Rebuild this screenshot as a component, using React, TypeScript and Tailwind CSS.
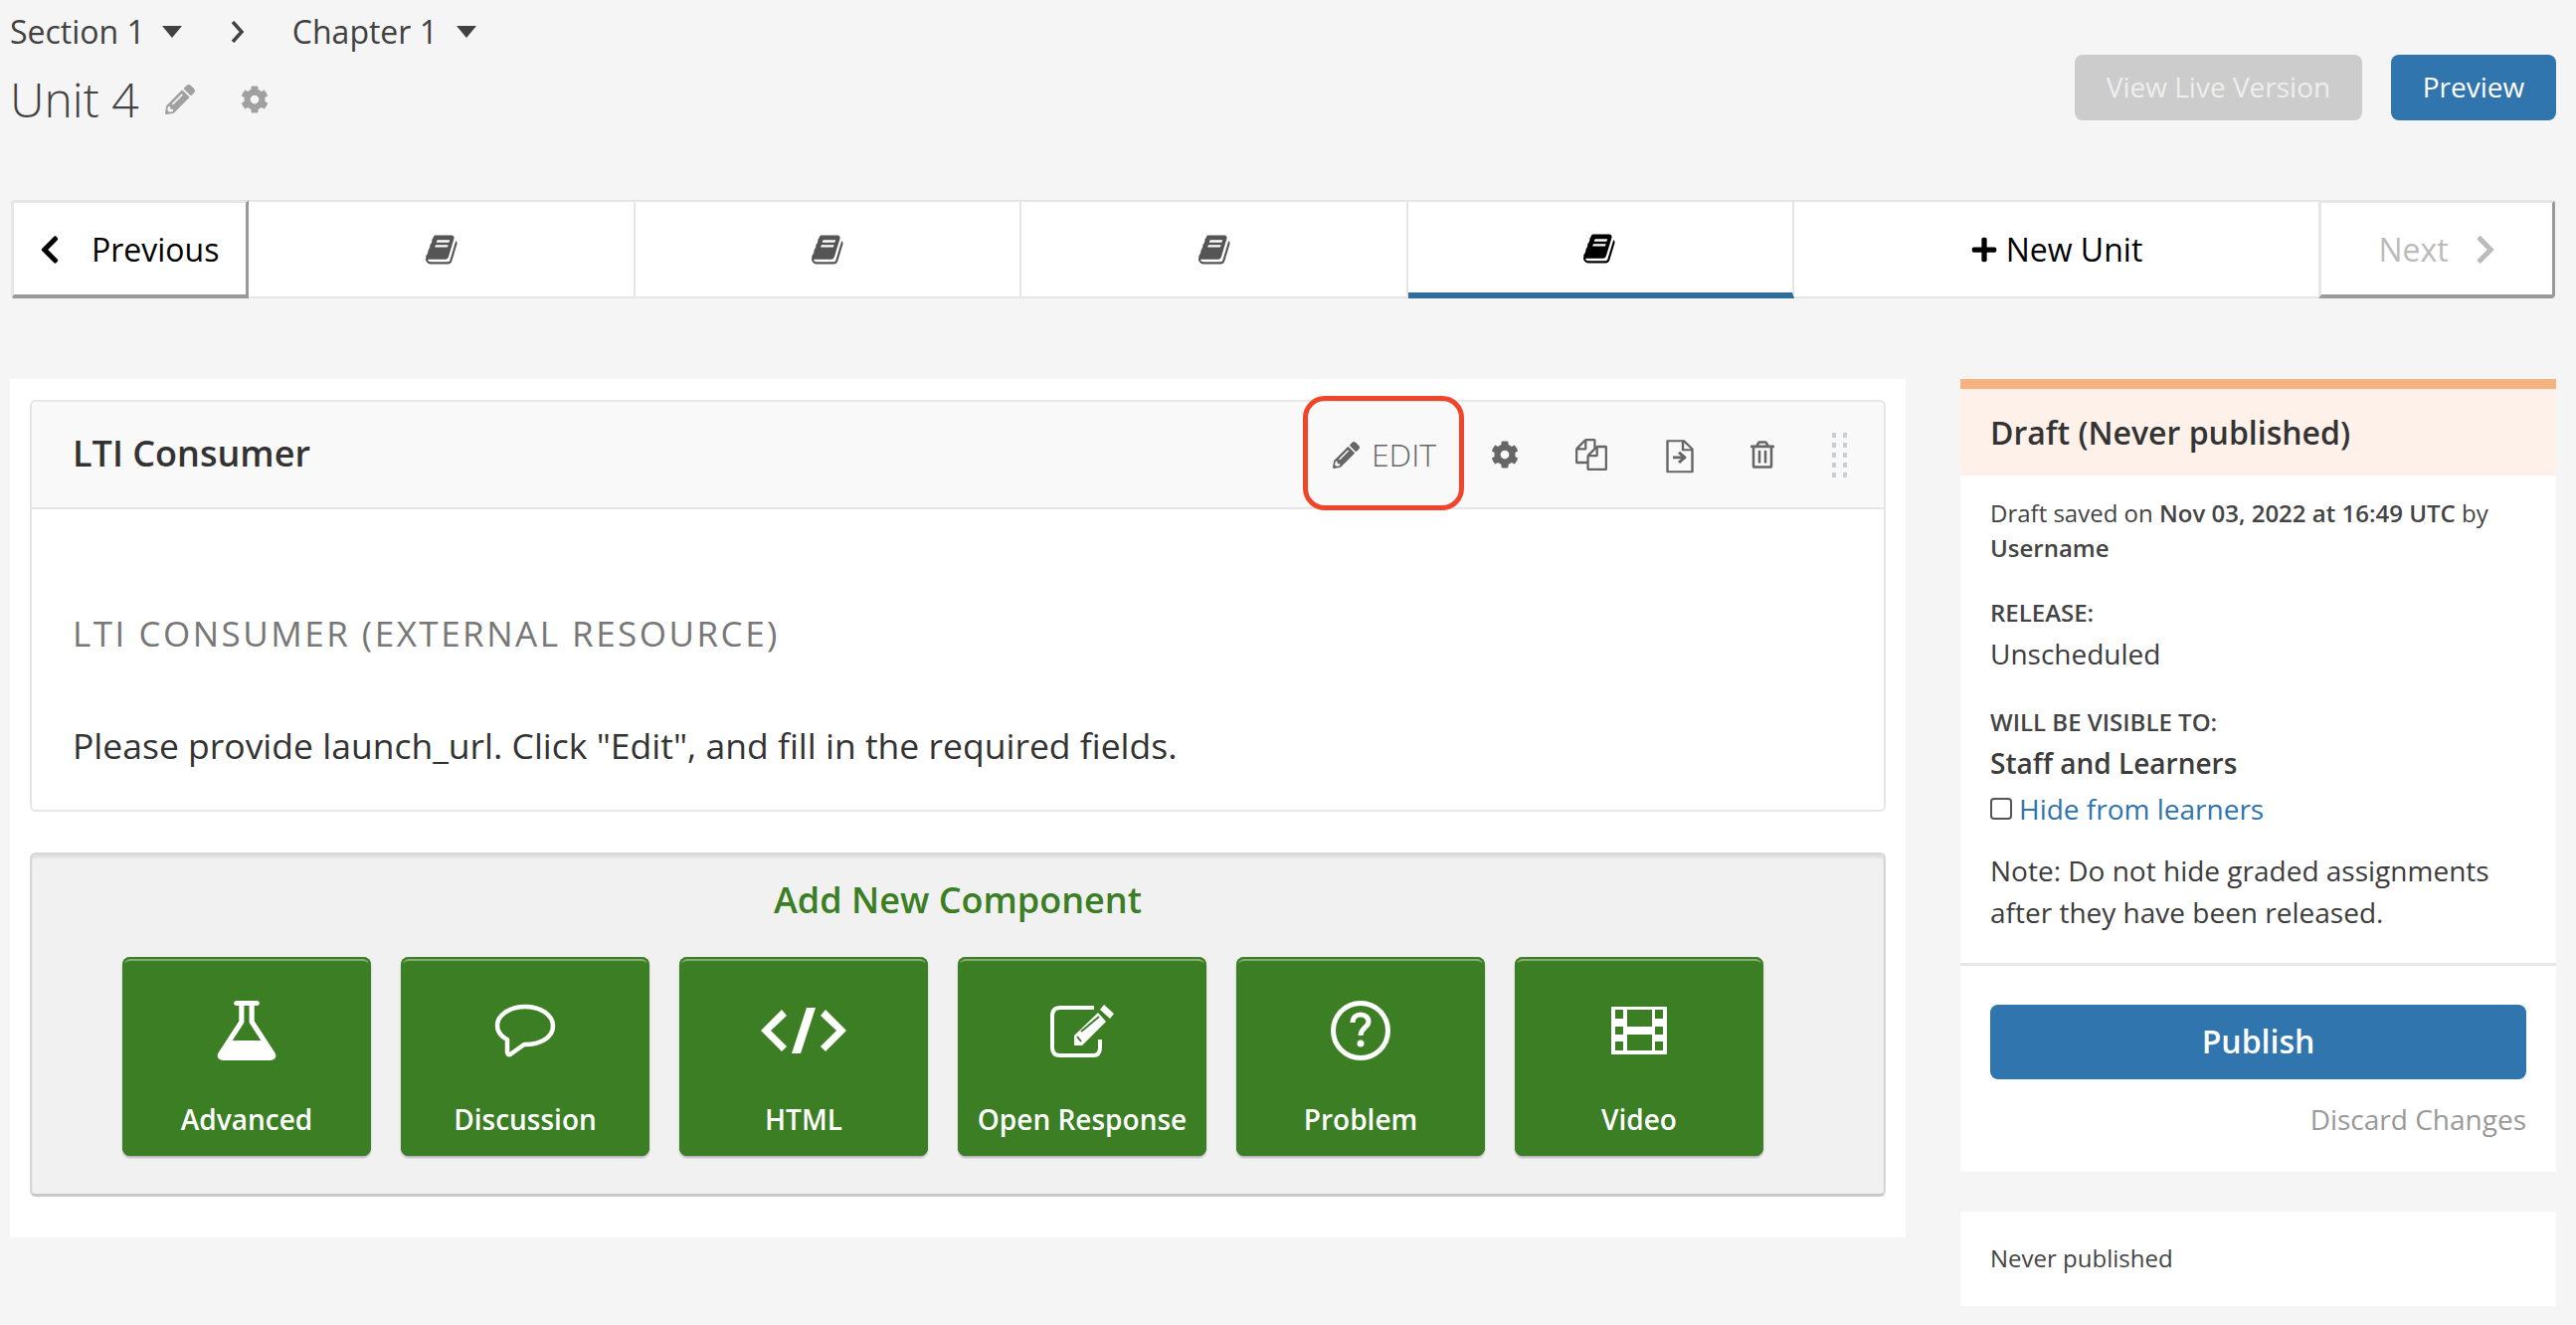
import { FaChevronLeft, FaChevronRight, FaCog, FaPencilAlt, FaPlus, FaRegTrashAlt } from 'react-icons/fa';
import type { ReactNode } from 'react';

const BOOK =
  'M1639 478q40 57 18 129l-275 906q-19 64-76.5 107.5t-122.5 43.5h-923q-77 0-148.5-53.5t-99.5-131.5q-24-67-2-127 0-4 3-27t4-37q1-8-3-21.5t-3-19.5q2-11 8-21t16.5-23.5 16.5-23.5q23-38 45-91.5t30-91.5q3-10 .5-30t-.5-28q3-11 17-28t17-23q21-36 42-92t25-90q1-9-2.5-32t.5-28q4-13 22-30.5t22-22.5q19-26 42.5-84.5t27.5-96.5q1-8-3-25.5t-2-26.5q2-8 9-18t18-23 17-21q8-12 16.5-30.5t15-35 16-36 19.5-32 26.5-23.5 36-11.5 47.5 5.5l-1 3q38-9 51-9h761q74 0 114 56t18 130l-274 906q-36 119-71.5 153.5t-128.5 34.5h-869q-27 0-38 15-11 16-1 43 24 70 144 70h923q29 0 56-15.5t35-41.5l300-987q7-22 5-57 38 15 59 43zm-1064 2q-4 13 2 22.5t20 9.5h608q13 0 25.5-9.5t16.5-22.5l21-64q4-13-2-22.5t-20-9.5h-608q-13 0-25.5 9.5t-16.5 22.5zm-83 256q-4 13 2 22.5t20 9.5h608q13 0 25.5-9.5t16.5-22.5l21-64q4-13-2-22.5t-20-9.5h-608q-13 0-25.5 9.5t-16.5 22.5z';
const FLASK =
  'M1591 1448q56 89 21.5 152.5t-140.5 63.5h-1152q-106 0-140.5-63.5t21.5-152.5l503-793v-399h-64q-26 0-45-19t-19-45 19-45 45-19h512q26 0 45 19t19 45-19 45-45 19h-64v399zm-779-725l-272 429h712l-272-429-20-31v-436h-128v436z';
const FILES =
  'M1696 384q40 0 68 28t28 68v1216q0 40-28 68t-68 28h-960q-40 0-68-28t-28-68v-288h-544q-40 0-68-28t-28-68v-672q0-40 20-88t48-76l408-408q28-28 76-48t88-20h416q40 0 68 28t28 68v328q68-40 128-40h416zm-544 213l-299 299h299v-299zm-640-384l-299 299h299v-299zm196 647l316-316v-416h-384v416q0 40-28 68t-68 28h-416v640h512v-256q0-40 20-88t48-76zm956 804v-1152h-384v416q0 40-28 68t-68 28h-416v640h896z';

const BookIcon = ({ className }: { className: string }) => (
  <svg viewBox="0 0 1792 1792" className={className} fill="currentColor">
    <path d={BOOK} />
  </svg>
);

const Caret = ({ className }: { className: string }) => (
  <svg viewBox="0 0 20 12" className={`w-[20px] h-[12px] ${className}`} fill="#414141">
    <path d="M0 0h20L10 12z" />
  </svg>
);

const FileImportIcon = () => (
  <svg viewBox="0 0 28 40" preserveAspectRatio="none" className="w-[28px] h-[34px]" fill="none" stroke="#666" strokeWidth="2.4" strokeLinejoin="round">
    <path d="M1.5 1.5H18L26.5 11V38H1.5z" />
    <path d="M17 2v10h9" />
    <path d="M7 21h11M13 15l6 6-6 6" strokeWidth="3.2" />
  </svg>
);

const BubbleIcon = () => (
  <svg viewBox="0 0 62 54" className="w-[62px] h-[54px]" fill="none" stroke="white" strokeWidth="4.5" strokeLinejoin="round">
    <path d="M31 3c15 0 28 8 28 19.5S46 41 31 41h-1L16 51c-1 .5-3 0-3-2V36C7 33 3 28 3 22 3 11 16 3 31 3z" />
  </svg>
);

const CodeIcon = () => (
  <svg viewBox="0 0 86 46" className="w-[86px] h-[46px]" fill="white">
    <path d="M0 23 21 2l5 6-16 15 16 16-5 5z" />
    <path d="M31 46h9L55 0h-9z" />
    <path d="M86 23 65 2l-5 6 16 15-16 16 5 5z" />
  </svg>
);

const EditIcon = () => (
  <svg viewBox="0 0 64 54" className="w-[64px] h-[54px]" fill="none">
    <path d="M44 4H10Q2 4 2 12v32q0 8 8 8h33q7 0 7-8v-8" stroke="white" strokeWidth="4" />
    <path d="M24 42V32L48 9l8 9-24 24z" fill="white" />
    <path d="M31 28 49 13" stroke="#3b7e24" strokeWidth="2" />
    <path d="M50 6l4-5 10 9-4 5z" fill="white" />
    <path d="M27 33l4 5" stroke="#3b7e24" strokeWidth="2" />
  </svg>
);

const QuestionIcon = () => (
  <svg viewBox="0 0 60 60" className="w-[60px] h-[60px]" fill="none" stroke="white">
    <circle cx="30" cy="30" r="27.5" strokeWidth="5" />
    <path d="M22 22c0-5 3.500-8 8-8s8 3 8 7c0 6-8 6-8 14" strokeWidth="5" />
    <circle cx="30" cy="43" r="3.500" fill="white" stroke="none" />
  </svg>
);

const FilmIcon = () => (
  <svg viewBox="0 0 56 48" className="w-[56px] h-[48px]">
    <path fill="white" d="M0 0h56v48H0z" />
    <path
      fill="#3b7e24"
      d="M4 3h8v9H4zM4 20h8v8H4zM4 35h8v9H4zM44 3h8v9h-8zM44 20h8v8h-8zM44 35h8v9h-8zM16 3h25v17H16zM16 28h25v16H16z"
    />
  </svg>
);

const panels: { label: string; icon: ReactNode }[] = [
  {
    label: 'Advanced',
    icon: (
      <svg viewBox="0 0 1792 1792" className="w-[72px] h-[70px]" preserveAspectRatio="none" fill="white">
        <path d={FLASK} />
      </svg>
    ),
  },
  { label: 'Discussion', icon: <BubbleIcon /> },
  { label: 'HTML', icon: <CodeIcon /> },
  { label: 'Open Response', icon: <EditIcon /> },
  { label: 'Problem', icon: <QuestionIcon /> },
  { label: 'Video', icon: <FilmIcon /> },
];

const App = () => {
  return (
    <div className="min-h-[1332px] bg-[#f5f5f5] font-['Open_Sans',sans-serif] text-[#3c3c3c] overflow-hidden">
      {/* Title row */}
      <div className="flex justify-between h-[201px] pl-[10px] pr-[20px]">
        <div>
          <div className="flex items-center h-[63px] text-[32px] text-[#414141]">
            <span>Section 1</span>
            <Caret className="ml-[17px]" />
            <svg viewBox="0 0 14 22" className="ml-[49px] w-[14px] h-[22px]" fill="none" stroke="#414141" strokeWidth="3.500">
              <path d="M2 1l9 10-9 10" />
            </svg>
            <span className="ml-[48px]">Chapter 1</span>
            <Caret className="ml-[19px]" />
          </div>
          <div className="flex items-center h-[74px] text-[48px] font-light text-[#414141]">
            <span>Unit 4</span>
            <FaPencilAlt className="ml-[26px] w-[30px] h-[30px] text-[#a0a0a0]" />
            <FaCog className="ml-[46px] w-[28px] h-[28px] text-[#a0a0a0]" />
          </div>
        </div>
        <div className="flex gap-[29px] mt-[55px] h-[66px] pb-0 text-[28px] text-white">
          <div className="flex items-center justify-center w-[289px] pb-[2px] rounded-[8px] bg-[#cccccc] text-[#eeeeee]">View Live Version</div>
          <div className="flex items-center justify-center w-[166px] pb-[2px] rounded-[8px] bg-[#3075ae]">Preview</div>
        </div>
      </div>

      {/* Unit navigation */}
      <div className="flex h-[99px] ml-[11px] mr-[21px] text-[32px] text-black">
        <div className="flex items-center w-[239px] pl-[26px] pt-[1px] bg-white border-t-[3px] border-l-[3px] border-r-[3px] border-b-[4px] border-t-[#e6e6e6] border-l-[#e6e6e6] border-r-[#999999] border-b-[#999999] rounded-tl-[4px] rounded-bl-[4px]">
          <FaChevronLeft className="w-[20px] h-[32px]" />
          <span className="ml-[32px]">Previous</span>
        </div>
        <div className="flex items-center justify-center w-[389px] bg-white border-t-2 border-b-2 border-r-2 border-[#e6e6e6]">
          <BookIcon className="ml-[2px] w-[34px] h-[34px] text-[#555555]" />
        </div>
        <div className="flex items-center justify-center w-[388px] bg-white border-t-2 border-b-2 border-r-2 border-[#e6e6e6]">
          <BookIcon className="ml-[2px] w-[34px] h-[34px] text-[#555555]" />
        </div>
        <div className="flex items-center justify-center w-[389px] bg-white border-t-2 border-b-2 border-r-2 border-[#e6e6e6]">
          <BookIcon className="ml-[2px] w-[34px] h-[34px] text-[#555555]" />
        </div>
        <div className="flex items-center justify-center w-[388px] pt-[2px] bg-white border-t-2 border-t-[#e6e6e6] border-b-[6px] border-b-[#316d99] border-r-2 border-r-[#e6e6e6]">
          <BookIcon className="w-[34px] h-[34px] text-black" />
        </div>
        <div className="flex items-center justify-center w-[527px] bg-white border-t-2 border-b-2 border-[#e6e6e6]">
          <FaPlus className="w-[28px] h-[28px]" />
          <span className="ml-[8px]">New Unit</span>
        </div>
        <div className="flex flex-1 items-center justify-center pt-[1px] bg-white text-[#bbbbbb] border-t-[3px] border-l-[3px] border-r-[3px] border-b-[4px] border-t-[#e6e6e6] border-l-[#e6e6e6] border-r-[#999999] border-b-[#999999] rounded-tr-[4px] rounded-br-[4px]">
          <span>Next</span>
          <FaChevronRight className="ml-[27px] w-[20px] h-[32px]" />
        </div>
      </div>

      <div className="flex gap-[55px] mt-[81px] ml-[10px] mr-[20px]">
        {/* Main column */}
        <div className="w-[1906px] h-[863px] pt-[21px] px-[20px] bg-white">
          <div className="relative h-[414px] border-2 border-[#e6e6e6] rounded-[6px]">
            <div className="flex items-center h-[108px] pl-[41px] bg-[#f9f9f9] border-b-2 border-[#e6e6e6] rounded-t-[6px]">
              <h2 className="pb-[2px] text-[36px] font-semibold text-[#333333]">LTI Consumer</h2>
              <div className="flex items-center ml-auto text-[#666666]">
                <FaPencilAlt className="w-[27px] h-[27px]" />
                <span className="ml-[12px] text-[32px] font-light">EDIT</span>
                <FaCog className="ml-[55px] w-[28px] h-[28px]" />
                <svg viewBox="0 0 1792 1792" className="ml-[57px] w-[32px] h-[32px]" fill="#666">
                  <path d={FILES} />
                </svg>
                <span className="ml-[59px] mt-[3px]"><FileImportIcon /></span>
                <FaRegTrashAlt className="ml-[57px] w-[24px] h-[28px]" />
                <div className="grid grid-cols-2 gap-x-[7px] gap-y-[5px] ml-[58px] mr-[37px]">
                  {Array.from({ length: 10 }).map((_, i) => (
                    <span key={i} className="w-[4px] h-[5px] bg-[#c8ced3]" />
                  ))}
                </div>
              </div>
            </div>
            <div className="pl-[41px]">
              <p className="mt-[102px] text-[35px] leading-[46px] tracking-[2.5px] text-[#777777]">LTI CONSUMER (EXTERNAL RESOURCE)</p>
              <p className="mt-[66px] text-[35.5px] leading-[46px] text-[#333333]">Please provide launch_url. Click "Edit", and fill in the required fields.</p>
            </div>
            {/* red highlight drawn over the screenshot */}
            <div className="absolute left-[1278px] top-[-6px] w-[162px] h-[115px] border-[5px] border-[#f0452a] rounded-[22px]" />
          </div>

          <div className="h-[346px] mt-[41px] pl-[91px] bg-[#f1f1f1] border-2 border-[#d6d6d6] border-b-[3px] border-b-[#c8c8c8] rounded-[6px] shadow-[inset_0_3px_3px_rgba(0,0,0,0.08)]">
            <h3 className="pt-[23px] pr-[91px] h-[103px] text-center text-[36px] leading-[46px] font-semibold text-[#3b7e24]">Add New Component</h3>
            <div className="flex gap-[30px]">
              {panels.map((p) => (
                <div key={p.label} className="flex flex-col items-center w-[250px] h-[200px] bg-[#3b7e24] rounded-[8px] text-white shadow-[inset_0_0_0_2px_#3b7e24,inset_0_4px_0_0_#85ae76,0_2px_2px_rgba(0,0,0,0.25)]">
                  <div className="flex items-center justify-center w-full h-[148px]">{p.icon}</div>
                  <span className="text-[28px] leading-[30px] font-semibold">{p.label}</span>
                </div>
              ))}
            </div>
          </div>
        </div>

        {/* Sidebar */}
        <div className="flex-1">
          <div className="h-[797px] bg-white">
            <div className="h-[97px] bg-[#fdf1e9] border-t-[10px] border-[#f6b37f] pl-[30px] flex items-center">
              <h3 className="text-[32px] font-semibold text-[#333333]">Draft (Never published)</h3>
            </div>
            <div className="px-[30px] pt-[20px] pb-[30px] border-b-[3px] border-[#e6e6e6]">
              <p className="text-[24px] leading-[35px] text-[#444444]">
                Draft saved on <b className="font-semibold">Nov 03, 2022 at 16:49 UTC</b> by <b className="font-semibold">Username</b>
              </p>
              <p className="mt-[31px] text-[24px] leading-[34px] font-semibold text-[#444444]">RELEASE:</p>
              <p className="mt-[4px] text-[28px] leading-[40px]">Unscheduled</p>
              <p className="mt-[32px] text-[24px] leading-[34px] font-semibold text-[#444444]">WILL BE VISIBLE TO:</p>
              <p className="mt-[4px] text-[28px] leading-[40px] font-semibold">Staff and Learners</p>
              <div className="flex items-center mt-[6px] h-[40px]">
                <span className="w-[22px] h-[22px] border-2 border-[#555555] rounded-[4px] bg-white" />
                <span className="ml-[7px] text-[28px] text-[#2f74ad]">Hide from learners</span>
              </div>
              <p className="mt-[21px] text-[28px] leading-[42px]">Note: Do not hide graded assignments after they have been released.</p>
            </div>
            <div className="px-[30px] pt-[39px]">
              <div className="flex items-center justify-center h-[75px] pb-[2px] rounded-[8px] bg-[#3075ae] text-[32px] font-semibold text-white">Publish</div>
              <p className="mt-[20px] text-right text-[28px] leading-[40px] text-[#999999]">Discard Changes</p>
            </div>
          </div>
          <div className="flex items-center h-[95px] mt-[40px] pl-[30px] pb-[2px] bg-white text-[24px] text-[#444444]">Never published</div>
        </div>
      </div>
    </div>
  );
};

export default App;
